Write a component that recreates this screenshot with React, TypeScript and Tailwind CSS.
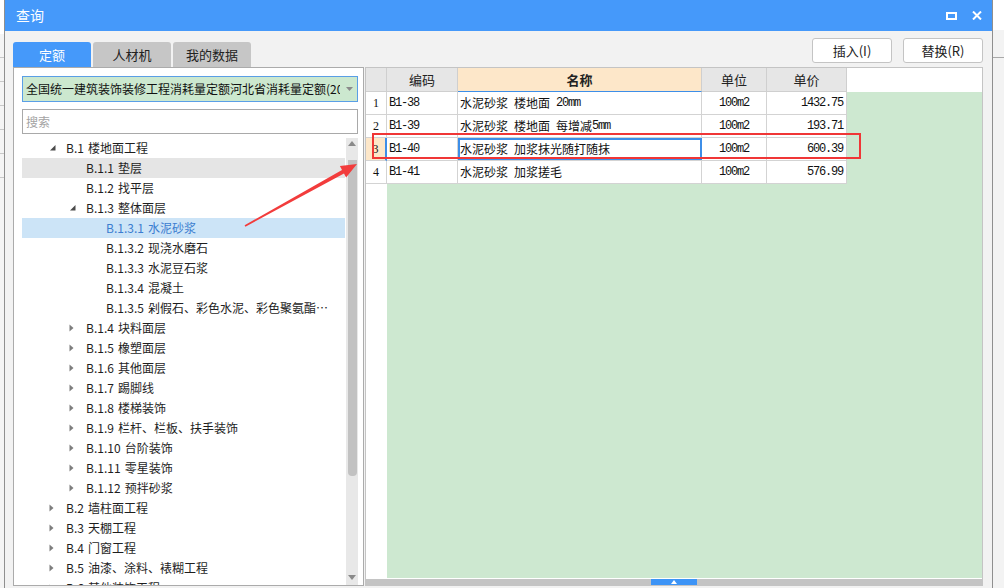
import React from "react";

const ui = "font-['Noto_Sans_CJK_SC',sans-serif]";
const mono = "font-['Liberation_Mono',monospace] text-[12px] tracking-[-1.2px]";

type TreeItem = {
  label: string;
  level: 1 | 2 | 3;
  fold?: "open" | "closed";
  mark?: "hover" | "active";
};

const treeItems: TreeItem[] = [
  { label: "B.1 楼地面工程", level: 1, fold: "open" },
  { label: "B.1.1 垫层", level: 2, mark: "hover" },
  { label: "B.1.2 找平层", level: 2 },
  { label: "B.1.3 整体面层", level: 2, fold: "open" },
  { label: "B.1.3.1 水泥砂浆", level: 3, mark: "active" },
  { label: "B.1.3.2 现浇水磨石", level: 3 },
  { label: "B.1.3.3 水泥豆石浆", level: 3 },
  { label: "B.1.3.4 混凝土", level: 3 },
  { label: "B.1.3.5 剁假石、彩色水泥、彩色聚氨酯、环氧地坪", level: 3 },
  { label: "B.1.4 块料面层", level: 2, fold: "closed" },
  { label: "B.1.5 橡塑面层", level: 2, fold: "closed" },
  { label: "B.1.6 其他面层", level: 2, fold: "closed" },
  { label: "B.1.7 踢脚线", level: 2, fold: "closed" },
  { label: "B.1.8 楼梯装饰", level: 2, fold: "closed" },
  { label: "B.1.9 栏杆、栏板、扶手装饰", level: 2, fold: "closed" },
  { label: "B.1.10 台阶装饰", level: 2, fold: "closed" },
  { label: "B.1.11 零星装饰", level: 2, fold: "closed" },
  { label: "B.1.12 预拌砂浆", level: 2, fold: "closed" },
  { label: "B.2 墙柱面工程", level: 1, fold: "closed" },
  { label: "B.3 天棚工程", level: 1, fold: "closed" },
  { label: "B.4 门窗工程", level: 1, fold: "closed" },
  { label: "B.5 油漆、涂料、裱糊工程", level: 1, fold: "closed" },
  { label: "B.6 其他装饰工程", level: 1, fold: "closed" },
];

const rows = [
  { code: "B1-38", name: "水泥砂浆 楼地面 20mm", unit: "100m2", price: "1432.75" },
  { code: "B1-39", name: "水泥砂浆 楼地面 每增减5mm", unit: "100m2", price: "193.71" },
  { code: "B1-40", name: "水泥砂浆 加浆抹光随打随抹", unit: "100m2", price: "600.39" },
  { code: "B1-41", name: "水泥砂浆 加浆搓毛", unit: "100m2", price: "576.99" },
];

// latin runs get the narrow mono face, CJK stays at 12px
function Mixed({ text }: { text: string }) {
  return (
    <>
      {text
        .split(/([\x20-\x7e]+)/)
        .filter(Boolean)
        .map((part, i) =>
          /^[\x20-\x7e]+$/.test(part) ? (
            <span key={i} className={`${mono} whitespace-pre`}>
              {part}
            </span>
          ) : (
            <span key={i}>{part}</span>
          )
        )}
    </>
  );
}

function TreeRow({ item }: { item: TreeItem }) {
  const pad = { 1: "pl-[26px]", 2: "pl-[46px]", 3: "pl-[66px]" }[item.level];
  const tone =
    item.mark === "hover"
      ? "bg-[#e5e5e5] text-[#1e1e1e]"
      : item.mark === "active"
      ? "bg-[#cce4f7] text-[#3b7dd0]"
      : "text-[#1e1e1e]";
  return (
    <div className={`h-[20px] shrink-0 flex items-center pr-[6px] ${pad} ${tone}`}>
      <span className="w-[18px] shrink-0 flex items-center">
        {item.fold === "open" && (
          <svg width="7" height="6" viewBox="0 0 7 6" className="ml-[2px]">
            <path d="M5.5 0 L5.5 5.5 L0 5.5 Z" fill="#4a4a4a" />
          </svg>
        )}
        {item.fold === "closed" && (
          <svg width="6" height="8" viewBox="0 0 6 8" className="ml-[1px]">
            <path d="M0.5 0.5 L4.5 4 L0.5 7.5 Z" fill="#7d7d7d" />
          </svg>
        )}
      </span>
      <span className="truncate text-[12px] leading-[20px] [word-spacing:1.5px]">{item.label}</span>
    </div>
  );
}

function LeftPanel() {
  return (
    <div className="w-[351px] h-full bg-white border border-[#ababab] flex flex-col pt-[8px] pl-[8px]">
      <div className="w-[336px] h-[26px] shrink-0 border border-[#5a9fe6] bg-[#cce8cf] flex items-center pl-[3px] pr-[4px]">
        <span className="flex-1 overflow-hidden whitespace-nowrap text-[12px] text-[#111]">
          全国统一建筑装饰装修工程消耗量定额河北省消耗量定额(2013)
        </span>
        <svg width="7" height="4" viewBox="0 0 7 4" className="ml-[6px] shrink-0">
          <path d="M0 0 L7 0 L3.5 4 Z" fill="#8a8a8a" />
        </svg>
      </div>
      <div className="w-[336px] h-[25px] shrink-0 mt-[7px] border border-[#a9a9a9] flex items-center pl-[3px] text-[12px] text-[#a3a3a3]">
        搜索
      </div>
      <div className="flex-1 min-h-0 mt-[4px] flex w-[336px]">
        <div className="w-[323px] flex flex-col overflow-hidden">
          {treeItems.map((item) => (
            <TreeRow key={item.label} item={item} />
          ))}
        </div>
        <div className="w-[12px] ml-[1px] bg-[#e8e8e8] flex flex-col items-center">
          <svg width="8" height="5" viewBox="0 0 8 5" className="mt-[3px] shrink-0">
            <path d="M0 5 L4 0 L8 5 Z" fill="#8a8a8a" />
          </svg>
          <div className="w-[9px] h-[316px] mt-[14px] bg-[#c2c2c2] rounded-b-[4px]" />
          <div className="flex-1" />
          <svg width="8" height="5" viewBox="0 0 8 5" className="mb-[5px] shrink-0">
            <path d="M0 0 L8 0 L4 5 Z" fill="#8a8a8a" />
          </svg>
        </div>
      </div>
    </div>
  );
}

function RightPanel() {
  const head = "h-full flex items-center justify-center border-r border-b border-[#cfcfcf] bg-[#e6e6e6] text-[13px] text-[#222]";
  const cell = "h-full flex items-center border-r border-[#d3d3d3] text-[12px] text-[#111] whitespace-nowrap";
  return (
    <div className="w-[618px] h-full border border-[#c4c4c4] bg-white flex flex-col">
      <div className="h-[24px] shrink-0 flex">
        <div className={`${head} w-[21px]`} />
        <div className={`${head} w-[71px]`}>编码</div>
        <div className={`${head} w-[244px] bg-[#fde7c9] border-b-[#3d8ee8] font-bold`}>名称</div>
        <div className={`${head} w-[65px]`}>单位</div>
        <div className={`${head} w-[80px]`}>单价</div>
        <div className="flex-1" />
      </div>
      <div className="flex-1 min-h-0 flex">
        <div className="w-[21px] flex flex-col bg-white">
          {rows.map((r, i) => (
            <div
              key={r.code}
              className={`h-[23px] flex items-center justify-center border-b border-[#d3d3d3] font-['Liberation_Serif',serif] text-[12px] text-[#111] ${
                i === 2 ? "bg-[#fde7c9] border-r-2 border-r-[#3d8ee8]" : "border-r"
              }`}
            >
              {i + 1}
            </div>
          ))}
        </div>
        <div className="flex-1 bg-[#cde8d0] flex flex-col">
          {rows.map((r, i) => (
            <div key={r.code} className="h-[23px] w-[460px] flex bg-white border-b border-[#d3d3d3]">
              <div className={`${cell} w-[71px] pl-[2px]`}>
                <span className={mono}>{r.code}</span>
              </div>
              <div
                className={`${cell} w-[244px] pl-[2px] ${
                  i === 2 ? "outline-2 outline-[#3d8ee8] -outline-offset-2" : ""
                }`}
              >
                <Mixed text={r.name} />
              </div>
              <div className={`${cell} w-[65px] justify-center`}>
                <span className={mono}>{r.unit}</span>
              </div>
              <div className={`${cell} w-[80px] justify-end pr-[3px]`}>
                <span className={mono}>{r.price}</span>
              </div>
            </div>
          ))}
        </div>
      </div>
      <div className="h-[1px] shrink-0 bg-white" />
      <div className="h-[6px] shrink-0 bg-[#c4c4c4] flex justify-center">
        <div className="w-[46px] h-full bg-[#3d94f6] flex items-center justify-center">
          <svg width="6" height="4" viewBox="0 0 6 4">
            <path d="M0 4 L3 0 L6 4 Z" fill="#ffffff" />
          </svg>
        </div>
      </div>
    </div>
  );
}

export default function App() {
  return (
    <div className={`${ui} relative w-[1004px] h-[588px] overflow-hidden flex bg-[#f0f0f0]`}>
      {/* window behind the dialog */}
      <div className="w-[4px] h-full flex flex-col bg-[#f4f4f4]">
        <div className="h-[34px] bg-white shrink-0" />
        <div className="h-[24px] border-b border-[#c8c8c8] shrink-0" />
        <div className="h-[24px] border-b border-[#c8c8c8] shrink-0" />
        <div className="h-[24px] border-b border-[#c8c8c8] shrink-0" />
        <div className="h-[24px] border-b border-[#c8c8c8] shrink-0" />
        <div className="h-[24px] border-b border-[#c8c8c8] shrink-0" />
        <div className="h-[24px] border-b border-[#c8c8c8] shrink-0" />
      </div>

      <div className="w-[989px] h-full flex flex-col border-x border-[#8f8f8f] bg-[#f2f2f2]">
        <div className="h-[31px] shrink-0 bg-[#4599fa] flex items-center pl-[11px] pr-[8px]">
          <span className="text-[14px] text-white">查询</span>
          <div className="flex-1" />
          <svg width="11" height="8" viewBox="0 0 11 8" className="mr-[15px]">
            <rect x="1" y="1" width="9" height="6" fill="none" stroke="#ffffff" strokeWidth="2" />
          </svg>
          <svg width="10" height="9" viewBox="0 0 10 9" className="mr-[2px]">
            <path d="M1 0.5 L9 8.5 M9 0.5 L1 8.5" stroke="#ffffff" strokeWidth="2" />
          </svg>
        </div>

        <div className="flex-1 flex flex-col pl-[8px] pr-[9px]">
          <div className="h-[36px] shrink-0 flex items-end">
            <div className="flex gap-[2px]">
              <div className="w-[78px] h-[25px] rounded-t-[3px] bg-[#4599fa] text-white text-[13px] flex items-center justify-center">
                定额
              </div>
              <div className="w-[78px] h-[25px] rounded-t-[3px] bg-[#c6c6c6] text-[#222] text-[13px] flex items-center justify-center">
                人材机
              </div>
              <div className="w-[78px] h-[25px] rounded-t-[3px] bg-[#c6c6c6] text-[#222] text-[13px] flex items-center justify-center">
                我的数据
              </div>
            </div>
            <div className="flex-1" />
            <div className="self-start mt-[7px] flex gap-[11px]">
              <button className="w-[80px] h-[25px] rounded-[3px] border border-[#c4c4c4] bg-white text-[13px] text-[#222]">
                插入(I)
              </button>
              <button className="w-[80px] h-[25px] rounded-[3px] border border-[#c4c4c4] bg-white text-[13px] text-[#222]">
                替换(R)
              </button>
            </div>
          </div>
          <div className="h-[519px] shrink-0 flex gap-[1px]">
            <LeftPanel />
            <RightPanel />
          </div>
        </div>
      </div>

      <div className="flex-1 h-full flex flex-col bg-[#f3f3f3]">
        <div className="h-[30px] bg-white shrink-0" />
        <div className="h-[28px] border-b border-[#a9a9a9] shrink-0" />
      </div>

      {/* red annotation */}
      <div className="absolute left-[372px] top-[133px] w-[489px] h-[26px] border-2 border-[#f03636]" />
      <svg className="absolute left-0 top-0 pointer-events-none" width="1004" height="588" viewBox="0 0 1004 588">
        <polygon
          points="245.4,226.7 344,173.5 346.1,177.4 357,164 339.9,166 342,170 244.6,225.3"
          fill="#f23c3c"
        />
      </svg>
    </div>
  );
}
